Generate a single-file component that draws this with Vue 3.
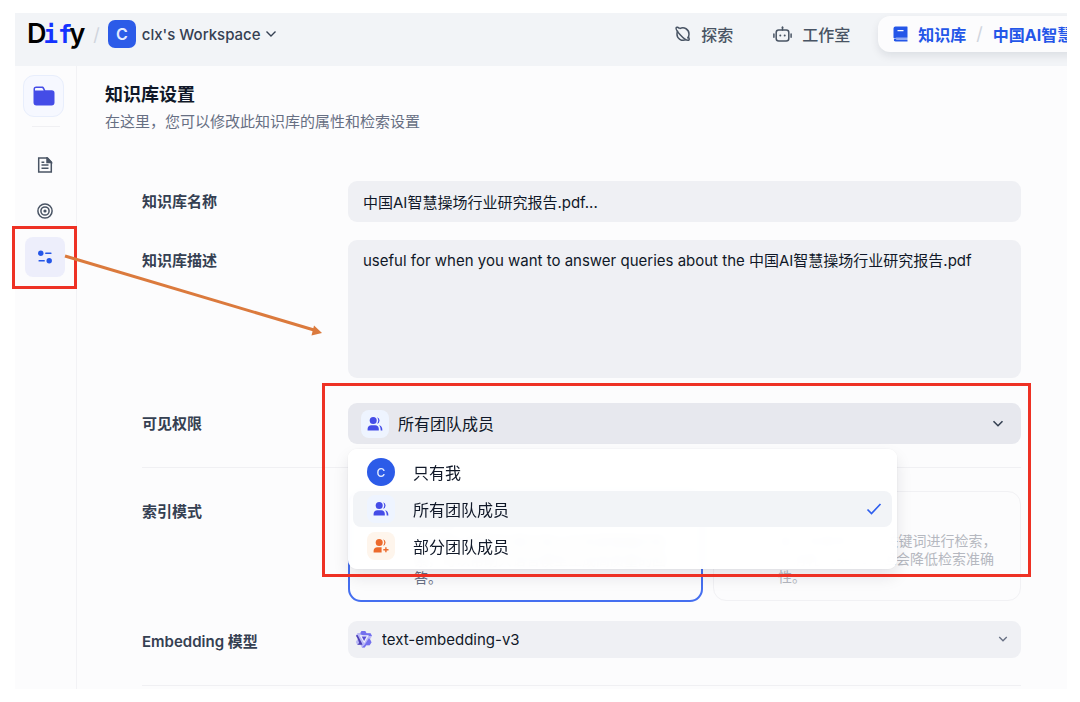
<script setup>
import { ref } from 'vue'

const name = ref('中国AI智慧操场行业研究报告.pdf...')
const description = ref('useful for when you want to answer queries about the 中国AI智慧操场行业研究报告.pdf')
const permission = ref('team')
const model = ref('text-embedding-v3')

const permissions = [
  { id: 'me', label: '只有我' },
  { id: 'team', label: '所有团队成员' },
  { id: 'partial', label: '部分团队成员' },
]
</script>

<template>
  <div class="page">
    <div class="app">
      <header class="topbar">
        <div class="brand">
          <a class="logo" href="#" aria-label="Dify"><span>D</span><span class="logo-mid">if</span><span>y</span></a>
          <span class="slash">/</span>
          <button class="workspace" type="button">
            <span class="workspace-badge">C</span>
            <span>clx's Workspace</span>
            <svg width="12" height="12" viewBox="0 0 12 12" fill="none" stroke="currentColor" stroke-width="1.4"><path d="M1.5 3.5 6 8l4.500-4.500" /></svg>
          </button>
        </div>
        <nav class="topnav">
          <a class="topnav-link explore" href="#">
            <svg width="16" height="16" viewBox="0 0 16 16" fill="none" stroke="currentColor" stroke-width="1.5" stroke-linejoin="round">
              <path d="M4.800 2.600A6.200 6.200 0 0 1 14 8.300c0 1.800-.6 3.200-1.500 4.200M11 13.600A6.200 6.200 0 0 1 2 7.800c0-1.200.3-2.200.8-3.100" />
              <path d="M4.800 2.600C3 1.300 1.700.9 1.300 1.500c-.7 1 1.100 4.300 4.100 7.500 3.100 3.400 6.600 5.700 8.300 5.200 1-.4.3-2.300-.5-3.600" />
            </svg>
            <span>探索</span>
          </a>
          <a class="topnav-link studio" href="#">
            <svg width="19" height="17" viewBox="0 0 19 17" fill="none" stroke="currentColor" stroke-width="1.500" stroke-linecap="round">
              <rect x="3.200" y="4" width="12.600" height="11" rx="2.500" />
              <path d="M9.500 1.300V4M.9 8v3.200M18.100 8v3.200" />
              <circle cx="9.500" cy="1.500" r=".9" fill="currentColor" stroke="none" />
              <circle cx="7.300" cy="9.500" r="1" fill="currentColor" stroke="none" />
              <circle cx="11.700" cy="9.500" r="1" fill="currentColor" stroke="none" />
            </svg>
            <span>工作室</span>
          </a>
          <div class="current">
            <a class="topnav-link" href="#">
              <svg width="15" height="16" viewBox="0 0 15 16" fill="currentColor">
                <path fill-rule="evenodd" d="M2.500.5H14a.5.5 0 0 1 .5.5v10.700H3.200c-.6 0-1.100.2-1.700.5-.5.200-1 .1-1-.6V2.500a2 2 0 0 1 2-2ZM4.500 4v1.300h6V4h-6Z" />
                <path d="M3.200 12.500h11.300v.9H3.200v.6h11.300v1.500H2.600a2.100 1.500 0 0 1 .6-3Z" />
              </svg>
              <span>知识库</span>
            </a>
            <span class="slash">/</span>
            <a class="topnav-link" href="#">中国AI智慧操场</a>
          </div>
        </nav>
      </header>

      <div class="body">
        <aside class="sidebar">
          <a class="dataset" href="#" aria-label="知识库">
            <svg width="22" height="20" viewBox="0 0 22 20" fill="#444ce7">
              <path fill-rule="evenodd" d="M3.200.5H9c1 0 1.700.5 2.100 1.300l1.200 2.500h6.500A2.700 2.700 0 0 1 21.500 7v9.500a3 3 0 0 1-3 3h-15a3 3 0 0 1-3-3V3.200A2.700 2.700 0 0 1 3.200.5Zm0 1.500c-.8 0-1.200.5-1.200 1.200v1.300h8.700l-1-1.900c-.2-.4-.5-.6-1-.6H3.200Z" />
            </svg>
          </a>
          <hr class="sidebar-rule" />
          <nav class="sidenav">
            <a class="sidenav-item" href="#" aria-label="文档">
              <svg width="16" height="16" viewBox="0 0 16 16" fill="none" stroke="currentColor" stroke-width="1.500">
                <path d="M1.700 1h8.800l3.800 4v10H1.700V1Z" />
                <path d="M10 1v4.500h4.300L10 1Z" fill="currentColor" />
                <path d="M4.500 5.200h2.800M4.500 8h7M4.500 11.200h7" />
              </svg>
            </a>
            <a class="sidenav-item" href="#" aria-label="召回测试">
              <svg width="16" height="16" viewBox="0 0 16 16" fill="none" stroke="currentColor" stroke-width="1.500">
                <circle cx="8" cy="8" r="7.100" />
                <circle cx="8" cy="8" r="4.100" />
                <circle cx="8" cy="8" r="1.600" fill="currentColor" stroke="none" />
              </svg>
            </a>
            <a class="sidenav-item active" href="#" aria-label="设置">
              <svg width="16" height="16" viewBox="0 0 16 16" fill="currentColor">
                <circle cx="3.800" cy="4.200" r="2.700" />
                <rect x="8.200" y="3.500" width="6.300" height="1.500" rx=".5" />
                <circle cx="12.200" cy="11.800" r="2.700" />
                <rect x="1.500" y="11" width="6.300" height="1.500" rx=".5" />
              </svg>
              <span class="mark mark-nav"></span>
              <svg class="arrow" width="260" height="84" viewBox="0 0 260 84" fill="none">
                <path d="M1 2 250 76" stroke="#db7a3d" stroke-width="3" />
                <path d="M258 79 247.500 81.500 250 71.500Z" fill="#db7a3d" />
              </svg>
            </a>
          </nav>
        </aside>

        <main class="content">
          <h1>知识库设置</h1>
          <p class="subtitle">在这里，您可以修改此知识库的属性和检索设置</p>

          <form class="form" @submit.prevent>
            <div class="row">
              <label for="ds-name">知识库名称</label>
              <input id="ds-name" v-model="name" class="field" type="text" />
            </div>
            <div class="row">
              <label for="ds-desc">知识库描述</label>
              <textarea id="ds-desc" v-model="description" class="field area"></textarea>
            </div>
            <div class="row permission-row">
              <label for="ds-perm">可见权限</label>
              <div class="picker">
                <span class="tile team picker-icon">
                  <svg width="16" height="16" viewBox="0 0 16 16" fill="currentColor">
                    <circle cx="6.200" cy="4.500" r="3.500" />
                    <path d="M.6 14.500v-1.700A3.800 3.800 0 0 1 4.400 9.300h3.800a3.800 3.800 0 0 1 3.600 3.500v1.700H.6Z" />
                    <path d="M10 1.200a3.400 3.400 0 0 1 0 6.600c1.700-2.100 1.700-4.500 0-6.600ZM12 9.300c2.100.5 3.400 2 3.400 5.200h-1.700c0-2.200-.5-3.800-1.700-5.200Z" />
                  </svg>
                </span>
                <select id="ds-perm" v-model="permission" class="select open">
                  <option v-for="p in permissions" :key="p.id" :value="p.id">{{ p.label }}</option>
                </select>
                <svg class="chevron" width="12" height="12" viewBox="0 0 12 12" fill="none" stroke="#354052" stroke-width="1.600"><path d="M1.500 3.200 6 7.700l4.500-4.500" /></svg>

                <div class="menu" role="listbox" aria-label="可见权限">
                  <button
                    v-for="p in permissions"
                    :key="p.id"
                    class="option"
                    :class="{ selected: p.id === permission }"
                    type="button"
                    role="option"
                    :aria-selected="p.id === permission"
                    @click="permission = p.id"
                  >
                    <span v-if="p.id === 'me'" class="tile avatar">C</span>
                    <span v-else class="tile" :class="p.id">
                      <svg width="16" height="16" viewBox="0 0 16 16" fill="currentColor">
                        <circle cx="6.200" cy="4.500" r="3.500" />
                        <path d="M10 1.200a3.400 3.400 0 0 1 0 6.600c1.700-2.100 1.700-4.500 0-6.600Z" />
                        <template v-if="p.id === 'team'">
                          <path d="M.6 14.500v-1.700A3.800 3.800 0 0 1 4.400 9.300h3.800a3.800 3.800 0 0 1 3.600 3.500v1.700H.6Z" />
                          <path d="M12 9.300c2.100.5 3.400 2 3.400 5.200h-1.700c0-2.200-.5-3.800-1.700-5.200Z" />
                        </template>
                        <template v-else>
                          <path d="M.6 14.500v-1.700A3.800 3.800 0 0 1 4.400 9.300h4.200v5.200H.6Z" />
                          <path d="M12.200 9.200h1.400V11h1.900v1.400h-1.900v1.900h-1.400v-1.900h-1.900V11h1.900Z" />
                        </template>
                      </svg>
                    </span>
                    <span>{{ p.label }}</span>
                    <svg v-if="p.id === permission" class="check" width="16" height="16" viewBox="0 0 16 16" fill="none" stroke="#2f5fee" stroke-width="1.700"><path d="m1.500 8.500 4 4L14.500 3" /></svg>
                  </button>
                </div>
                <span class="mark mark-permission"></span>
              </div>
            </div>
            <hr class="rule" />
            <div class="row index-row">
              <span class="label">索引模式</span>
              <div class="cards">
                <section class="card chosen">
                  <h2>高质量</h2>
                  <p>调用嵌入模型处理文档以实现更精确的检索，可以帮助大语言模型生成高质量的回答。</p>
                </section>
                <section class="card disabled">
                  <h2>经济</h2>
                  <p>每个块使用 10 个关键词进行检索，<br />不消耗 tokens，但会降低检索准确<br />性。</p>
                </section>
              </div>
            </div>
            <div class="row model-row">
              <label for="ds-model">Embedding 模型</label>
              <div class="picker">
                <svg class="model-icon" width="18" height="18" viewBox="0 0 18 18">
                  <path d="M6.500 1h3.700l1.300 2.200h4l1.500 2.800-2 3.300 1.500 3-1.900 3h-3.400L9.700 17.500H6.900l-1.600-2.700H2.200L.8 12l1.900-3.300L.9 5.500 2.600 3h2.800Z" fill="#b9b8f6" />
                  <path d="M6.500 1h3.700l1.300 2.200h4L17 6H8.800L5.800 4.200 5.400 3ZM14.600 15.300h-3.400L9.700 17.500H6.900l2.800-2.700 4.200-6.500 1.100 1 1.500 3Z" fill="#7470ee" />
                  <path d="M.9 5.500 2.600 5l3.900 7.400 1 2.400H2.200l2-1.800-1.500-4.300Z" fill="#4c3fb5" />
                  <path d="M4.600 5.200h9.200L9.200 13.300Z" fill="#f1f1fb" />
                  <path d="M6.700 6.500h4.900L9.100 10.900Z" fill="#594fd5" />
                </svg>
                <select id="ds-model" v-model="model" class="select model">
                  <option>text-embedding-v3</option>
                </select>
                <svg class="chevron" width="10" height="10" viewBox="0 0 12 12" fill="none" stroke="#676f83" stroke-width="1.600"><path d="M1.500 3.700 6 8.200l4.500-4.500" /></svg>
              </div>
            </div>
            <hr class="rule last" />
          </form>
        </main>
      </div>
    </div>
  </div>
</template>

<style>
body {
  margin: 0;
  background: #fff;
}
</style>

<style scoped>
* {
  box-sizing: border-box;
}

.page {
  min-height: 100vh;
  display: flex;
  padding: 13px 13px 14px 15px;
  font-family: Inter, "Noto Sans CJK SC", sans-serif;
  font-size: 15px;
  color: #101828;
}

.app {
  flex: 1;
  min-width: 0;
  display: flex;
  flex-direction: column;
  background: #fcfcfd;
}

a {
  color: inherit;
  text-decoration: none;
}

button,
input,
textarea,
select {
  margin: 0;
  border: 0;
  font: inherit;
  color: inherit;
}

button {
  padding: 0;
  background: none;
  cursor: pointer;
}

svg {
  display: block;
  flex: none;
}

.topbar {
  display: flex;
  height: 53px;
  padding-bottom: 11px;
  overflow: hidden;
  background: #f2f4f7;
}

.brand {
  flex: 0 0 62%;
  display: flex;
  align-items: center;
  padding-left: 12px;
}

.logo {
  display: flex;
  align-items: baseline;
  font-size: 27px;
  line-height: 32px;
  font-weight: 600;
  color: #000;
}

.logo-mid {
  margin: 0 -3px;
  font-family: "DejaVu Sans Mono", monospace;
  font-size: 24px;
  font-weight: 700;
  color: #1433ff;
}

.slash {
  color: #d0d5dd;
  font-size: 18px;
}

.brand .slash {
  padding: 0 8px;
}

.workspace {
  display: flex;
  align-items: center;
  gap: 6px;
  color: #354052;
  font-weight: 500;
}

.workspace-badge {
  display: grid;
  place-items: center;
  width: 28px;
  height: 28px;
  border-radius: 7px;
  background: #2c5be8;
  color: #e4ecff;
  font-size: 16px;
  font-weight: 600;
}

.workspace svg {
  margin-left: -2px;
}

.topnav {
  flex: 1;
  min-width: 0;
  display: flex;
  align-items: center;
  padding-left: 8px;
  font-size: 16px;
  font-weight: 500;
  color: #495464;
  white-space: nowrap;
}

.topnav-link {
  display: flex;
  align-items: center;
  gap: 10px;
}

.explore {
  margin-right: 40px;
}

.studio {
  margin-right: 28px;
}

.current {
  display: flex;
  align-items: center;
  height: 36px;
  margin-top: -1px;
  padding: 0 15px;
  border-radius: 12px;
  background: #fcfcfd;
  box-shadow: 0 4px 8px rgba(16, 24, 40, 0.09);
  color: #2456e8;
  font-weight: 700;
}

.current .slash {
  padding: 0 10px;
  font-weight: 400;
}

.body {
  flex: 1;
  display: flex;
}

.sidebar {
  position: relative;
  z-index: 2;
  flex: 0 0 62px;
  padding: 9px 0 0 8px;
  border-right: 1px solid #f2f2f5;
}

.dataset {
  display: grid;
  place-items: center;
  width: 41px;
  height: 42px;
  border: 1px solid #e8eefc;
  border-radius: 11px;
  background: #f6f8ff;
}

.sidebar-rule {
  width: 28px;
  height: 1px;
  margin: 9px 0 18px 9px;
  border: 0;
  background: #f0f0f3;
}

.sidenav {
  display: flex;
  flex-direction: column;
  gap: 6px;
  padding-left: 2px;
  color: #495464;
}

.sidenav-item {
  position: relative;
  display: grid;
  place-items: center;
  width: 40px;
  height: 40px;
  border-radius: 8px;
}

.sidenav-item.active {
  background: #edeefb;
  color: #2456e8;
}

.mark {
  position: absolute;
  border: 3px solid #ee3124;
  pointer-events: none;
}

.mark-nav {
  inset: -11px -12px -12px -13px;
}

.arrow {
  position: absolute;
  left: 39px;
  top: 17px;
  pointer-events: none;
}

.content {
  flex: 1;
  min-width: 0;
  padding: 17px 46px 0 28px;
}

h1 {
  margin: 0;
  font-size: 18px;
  line-height: 24px;
  font-weight: 700;
}

.subtitle {
  margin: 4px 0 48px;
  line-height: 22px;
  color: #676f83;
}

.form {
  padding-left: 37px;
}

.row {
  display: grid;
  grid-template-columns: 206px minmax(0, 1fr);
  margin-bottom: 18px;
}

.row > label,
.label {
  padding-top: 10px;
  line-height: 22px;
  font-weight: 600;
  color: #354052;
}

.field,
.select {
  display: block;
  width: 100%;
  height: 41px;
  padding: 0 15px;
  border-radius: 9px;
  background: #eff0f4;
  outline: 0;
}

.area {
  height: 138px;
  padding-top: 10px;
  line-height: 22px;
  resize: none;
}

.row.permission-row {
  margin: 25px 0 23px;
}

.picker {
  position: relative;
}

.select {
  appearance: none;
}

.select.open {
  padding-left: 50px;
  background: #e7e8ee;
  font-size: 16px;
}

.select.model {
  height: 37px;
  padding-left: 34px;
}

.picker-icon,
.model-icon,
.chevron {
  position: absolute;
  pointer-events: none;
}

.picker-icon {
  left: 13px;
  top: 7px;
}

.model-icon {
  left: 7px;
  top: 9px;
}

.chevron {
  right: 17px;
  top: 15px;
}

.model-row .chevron {
  right: 13px;
  top: 13px;
}

.tile {
  display: grid;
  place-items: center;
  width: 28px;
  height: 28px;
  border-radius: 8px;
}

.team {
  background: #eef4ff;
  color: #444ce7;
}

.partial {
  background: #fef5ec;
  color: #ec6a2c;
}

.avatar {
  border-radius: 50%;
  background: #2c5be8;
  color: #e4ecff;
  font-size: 12px;
  font-weight: 500;
}

.menu {
  position: absolute;
  z-index: 1;
  top: 46px;
  left: 0;
  display: grid;
  gap: 1px;
  width: 549px;
  max-width: 100%;
  padding: 5px;
  border-radius: 9px;
  background: rgba(255, 255, 255, 0.96);
  backdrop-filter: blur(5px);
  box-shadow: 0 0 0 1px rgba(16, 24, 40, 0.02), 0 8px 16px rgba(16, 24, 40, 0.1);
}

.option {
  display: flex;
  align-items: center;
  gap: 18px;
  width: 100%;
  height: 36px;
  padding: 0 10px 0 14px;
  border-radius: 8px;
  font-size: 16px;
  text-align: left;
}

.option.selected {
  background: #f2f4f7;
}

.check {
  margin-left: auto;
}

.mark-permission {
  z-index: 2;
  top: -20px;
  right: -10px;
  left: -26px;
  height: 194px;
}

.rule {
  height: 1px;
  margin: 0 0 23px;
  border: 0;
  background: #f0f0f3;
}

.rule.last {
  margin: 27px 0 3px;
}

.cards {
  display: grid;
  grid-template-columns: 355px minmax(0, 1fr);
  align-items: start;
  gap: 10px;
}

.card {
  height: 110px;
  padding: 16px 20px 8px 64px;
  border: 1px solid #f1f1f4;
  border-radius: 13px;
  font-size: 14px;
  line-height: 18px;
  color: #676f83;
}

.card.chosen {
  height: 111px;
  border: 2px solid #456ff0;
}

.card h2 {
  margin: 0 0 6px;
  font-size: 14px;
  line-height: 18px;
}

.card p {
  margin: 0;
}

.card.disabled p {
  white-space: nowrap;
}

.card.disabled {
  color: #b5b8c0;
}

.row.index-row {
  margin-bottom: 19px;
}

.row.model-row {
  margin-bottom: 0;
}
</style>
